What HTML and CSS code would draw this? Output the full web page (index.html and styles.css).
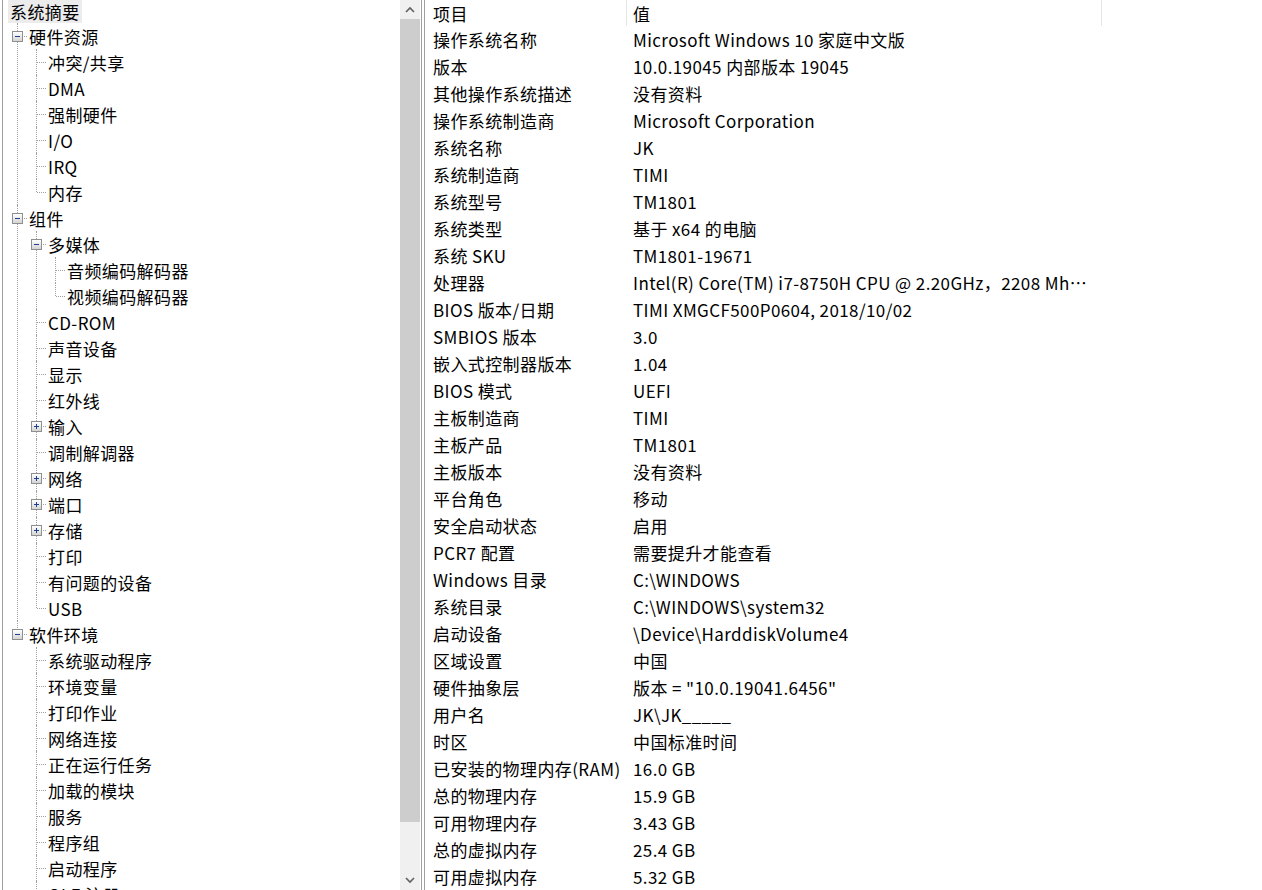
FILE: index.html
```html
<!DOCTYPE html>
<html>
<head>
	<meta charset="utf-8">
	<title>系统信息</title>
	<link rel="stylesheet" href="styles.css">
</head>
<body>
	<div class="window">
		<div class="tree-pane">
			<div class="tree">
				<div class="root"><span class="root-label">系统摘要</span></div>
				<ul class="top">
					<li>
						<div class="node"><span class="box minus"></span>硬件资源</div>
						<ul>
							<li><div class="node">冲突/共享</div></li>
							<li><div class="node">DMA</div></li>
							<li><div class="node">强制硬件</div></li>
							<li><div class="node">I/O</div></li>
							<li><div class="node">IRQ</div></li>
							<li><div class="node">内存</div></li>
						</ul>
					</li>
					<li>
						<div class="node"><span class="box minus"></span>组件</div>
						<ul>
							<li>
								<div class="node"><span class="box minus"></span>多媒体</div>
								<ul>
									<li><div class="node">音频编码解码器</div></li>
									<li><div class="node">视频编码解码器</div></li>
								</ul>
							</li>
							<li><div class="node">CD-ROM</div></li>
							<li><div class="node">声音设备</div></li>
							<li><div class="node">显示</div></li>
							<li><div class="node">红外线</div></li>
							<li><div class="node"><span class="box plus"></span>输入</div></li>
							<li><div class="node">调制解调器</div></li>
							<li><div class="node"><span class="box plus"></span>网络</div></li>
							<li><div class="node"><span class="box plus"></span>端口</div></li>
							<li><div class="node"><span class="box plus"></span>存储</div></li>
							<li><div class="node">打印</div></li>
							<li><div class="node">有问题的设备</div></li>
							<li><div class="node">USB</div></li>
						</ul>
					</li>
					<li>
						<div class="node"><span class="box minus"></span>软件环境</div>
						<ul>
							<li><div class="node">系统驱动程序</div></li>
							<li><div class="node">环境变量</div></li>
							<li><div class="node">打印作业</div></li>
							<li><div class="node">网络连接</div></li>
							<li><div class="node">正在运行任务</div></li>
							<li><div class="node">加载的模块</div></li>
							<li><div class="node">服务</div></li>
							<li><div class="node">程序组</div></li>
							<li><div class="node">启动程序</div></li>
							<li><div class="node">OLE 注册</div></li>
							<li><div class="node">Windows 错误报告</div></li>
						</ul>
					</li>
				</ul>
			</div>
			<div class="scrollbar">
				<div class="sb-btn">
					<svg width="10" height="7" viewBox="0 0 10 7"><polyline points="1,6 5,2 9,6" fill="none" stroke="#606060" stroke-width="1.6"/></svg>
				</div>
				<div class="sb-thumb"></div>
				<div class="sb-track"></div>
				<div class="sb-btn">
					<svg width="10" height="7" viewBox="0 0 10 7"><polyline points="1,1 5,5 9,1" fill="none" stroke="#606060" stroke-width="1.6"/></svg>
				</div>
			</div>
		</div>
		<div class="splitter"></div>
		<div class="list-pane">
			<div class="list">
				<div class="row head"><div class="key">项目</div><div class="val">值</div></div>
				<div class="row"><div class="key">操作系统名称</div><div class="val">Microsoft Windows 10 家庭中文版</div></div>
				<div class="row"><div class="key">版本</div><div class="val">10.0.19045 内部版本 19045</div></div>
				<div class="row"><div class="key">其他操作系统描述</div><div class="val">没有资料</div></div>
				<div class="row"><div class="key">操作系统制造商</div><div class="val">Microsoft Corporation</div></div>
				<div class="row"><div class="key">系统名称</div><div class="val">JK</div></div>
				<div class="row"><div class="key">系统制造商</div><div class="val">TIMI</div></div>
				<div class="row"><div class="key">系统型号</div><div class="val">TM1801</div></div>
				<div class="row"><div class="key">系统类型</div><div class="val">基于 x64 的电脑</div></div>
				<div class="row"><div class="key">系统 SKU</div><div class="val">TM1801-19671</div></div>
				<div class="row"><div class="key">处理器</div><div class="val">Intel(R) Core(TM) i7-8750H CPU @ 2.20GHz，2208 Mhz，6 个内核，12 个逻辑处理器</div></div>
				<div class="row"><div class="key">BIOS 版本/日期</div><div class="val">TIMI XMGCF500P0604, 2018/10/02</div></div>
				<div class="row"><div class="key">SMBIOS 版本</div><div class="val">3.0</div></div>
				<div class="row"><div class="key">嵌入式控制器版本</div><div class="val">1.04</div></div>
				<div class="row"><div class="key">BIOS 模式</div><div class="val">UEFI</div></div>
				<div class="row"><div class="key">主板制造商</div><div class="val">TIMI</div></div>
				<div class="row"><div class="key">主板产品</div><div class="val">TM1801</div></div>
				<div class="row"><div class="key">主板版本</div><div class="val">没有资料</div></div>
				<div class="row"><div class="key">平台角色</div><div class="val">移动</div></div>
				<div class="row"><div class="key">安全启动状态</div><div class="val">启用</div></div>
				<div class="row"><div class="key">PCR7 配置</div><div class="val">需要提升才能查看</div></div>
				<div class="row"><div class="key">Windows 目录</div><div class="val">C:\WINDOWS</div></div>
				<div class="row"><div class="key">系统目录</div><div class="val">C:\WINDOWS\system32</div></div>
				<div class="row"><div class="key">启动设备</div><div class="val">\Device\HarddiskVolume4</div></div>
				<div class="row"><div class="key">区域设置</div><div class="val">中国</div></div>
				<div class="row"><div class="key">硬件抽象层</div><div class="val">版本 = "10.0.19041.6456"</div></div>
				<div class="row"><div class="key">用户名</div><div class="val">JK\JK_____</div></div>
				<div class="row"><div class="key">时区</div><div class="val">中国标准时间</div></div>
				<div class="row"><div class="key">已安装的物理内存(RAM)</div><div class="val">16.0 GB</div></div>
				<div class="row"><div class="key">总的物理内存</div><div class="val">15.9 GB</div></div>
				<div class="row"><div class="key">可用物理内存</div><div class="val">3.43 GB</div></div>
				<div class="row"><div class="key">总的虚拟内存</div><div class="val">25.4 GB</div></div>
				<div class="row"><div class="key">可用虚拟内存</div><div class="val">5.32 GB</div></div>
				<div class="row"><div class="key">页面文件空间</div><div class="val">9.50 GB</div></div>
			</div>
		</div>
	</div>
</body>
</html>
```

FILE: styles.css
```css
html, body {
	margin: 0;
	padding: 0;
	background-color: white;
}

body {
	font-family: "Noto Sans CJK SC", sans-serif;
	font-size: 17px;
	letter-spacing: 0.4px;
	color: #000;
}

.window {
	display: flex;
	height: 890px;
	overflow: hidden;
	padding-left: 2px;
}

/* left tree */
.tree-pane {
	display: flex;
	border-left: 1px solid #a0a0a0;
	border-right: 1px solid #a0a0a0;
	padding-right: 1px;
	height: 890px;
}

.tree {
	width: 397px;
	overflow: hidden;
	white-space: nowrap;
}

.root {
	height: 23px;
	display: flex;
	align-items: center;
	padding-left: 5px;
}

.root-label {
	background-color: #ececec;
	padding: 0 2px;
	line-height: 23px;
}

.tree ul {
	list-style: none;
	margin: 0;
	padding: 0 0 0 19px;
}

.tree ul.top {
	padding-left: 0;
}

.tree li {
	position: relative;
}

.tree li::before {
	content: "";
	position: absolute;
	left: 14px;
	top: 0;
	bottom: 0;
	border-left: 1px dotted #a0a0a0;
}

.tree li:last-child::before {
	bottom: auto;
	height: 13px;
}

.node {
	position: relative;
	height: 26px;
	display: flex;
	align-items: center;
	padding-left: 26px;
}

.node::before {
	content: "";
	position: absolute;
	left: 15px;
	top: 13px;
	width: 9px;
	border-top: 1px dotted #a0a0a0;
}

.box {
	position: absolute;
	left: 9px;
	top: 8px;
	width: 11px;
	height: 11px;
	box-sizing: border-box;
	border: 1px solid #8e8f8f;
	background: linear-gradient(#ffffff, #d4d4d4);
	z-index: 1;
}

.box::before,
.box::after {
	content: "";
	position: absolute;
	background-color: #1c3f94;
}

.box::before {
	left: 2px;
	top: 4px;
	width: 5px;
	height: 1px;
}

.plus::after {
	left: 4px;
	top: 2px;
	width: 1px;
	height: 5px;
}

/* scrollbar */
.scrollbar {
	width: 20px;
	background-color: #f0f0f0;
	display: flex;
	flex-direction: column;
}

.sb-btn {
	height: 19px;
	display: flex;
	align-items: center;
	justify-content: center;
}

.sb-thumb {
	height: 803px;
	background-color: #cdcdcd;
}

.sb-track {
	flex: 1;
}

.splitter {
	width: 2px;
}

/* right list */
.list-pane {
	flex: 1;
	border-left: 1px solid #a0a0a0;
	overflow: hidden;
}

.list {
	margin-top: -1px;
}

.row {
	display: grid;
	grid-template-columns: 202px 475px;
	height: 27px;
}

.key,
.val {
	white-space: nowrap;
	overflow: hidden;
	min-width: 0;
	line-height: 27px;
}

.key {
	padding-left: 8px;
}

.val {
	padding-left: 6px;
	padding-right: 10px;
	text-overflow: ellipsis;
}

.head .key,
.head .val {
	border-right: 1px solid #e5e5e5;
	height: 26px;
	margin-top: 1px;
}
```
